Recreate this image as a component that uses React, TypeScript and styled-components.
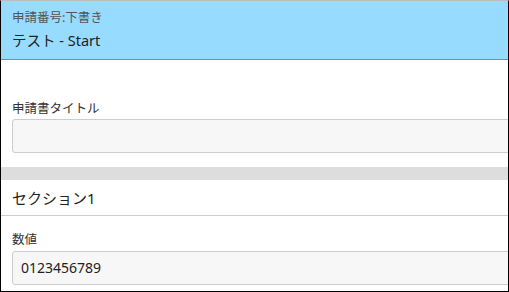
import styled, { createGlobalStyle } from 'styled-components'

const GlobalStyle = createGlobalStyle`
    html, body {
        margin: 0;
        padding: 0;
        background: #ffffff;
    }
    body {
        font-family: "Noto Sans", "Noto Sans CJK JP", sans-serif;
        color: #222222;
    }
`

const Frame = styled.div`
    box-sizing: border-box;
    width: 509px;
    height: 292px;
    border: 1px solid #000000;
    border-top-color: #bcbcbc;
    overflow: hidden;
    display: flex;
    flex-direction: column;
`

const Header = styled.header`
    background: #97dbff;
    border-bottom: 1px solid #4a9ccb;
    padding: 8px 11px 0;
    height: 50px;
    display: flex;
    flex-direction: column;
    gap: 3px;
`

const Status = styled.div`
    font-size: 12.5px;
    line-height: 18px;
    color: #555555;
`

const Title = styled.div`
    font-size: 14.5px;
    line-height: 20px;
    color: #222222;
`

const Field = styled.div<{ $top: number; $bottom: number }>`
    padding: ${p => p.$top}px 0 ${p => p.$bottom}px 11px;
    display: flex;
    flex-direction: column;
`

const Label = styled.label`
    font-size: 12.5px;
    line-height: 18px;
    color: #333333;
`

const Input = styled.div<{ $gap: number }>`
    box-sizing: border-box;
    margin-top: ${p => p.$gap}px;
    width: calc(100% + 20px);
    height: 34px;
    background: #f7f7f7;
    border: 1px solid #cccccc;
    border-radius: 3px;
    padding: 0 8px;
    font-size: 14px;
    line-height: 32px;
    color: #222222;
`

const Divider = styled.div`
    height: 13px;
    background: #dddddd;
`

const SectionTitle = styled.h2`
    margin: 0;
    height: 35px;
    padding-left: 11px;
    display: flex;
    align-items: center;
    font-size: 15px;
    font-weight: normal;
    border-bottom: 1px solid #cccccc;
`

export default function App() {
    return (
        <>
            <GlobalStyle />
            <Frame>
                <Header>
                    <Status>申請番号:下書き</Status>
                    <Title>テスト - Start</Title>
                </Header>
                <Field $top={40} $bottom={14}>
                    <Label>申請書タイトル</Label>
                    <Input $gap={1} />
                </Field>
                <Divider />
                <SectionTitle>セクション1</SectionTitle>
                <Field $top={15} $bottom={6}>
                    <Label>数値</Label>
                    <Input $gap={2}>0123456789</Input>
                </Field>
            </Frame>
        </>
    )
}
